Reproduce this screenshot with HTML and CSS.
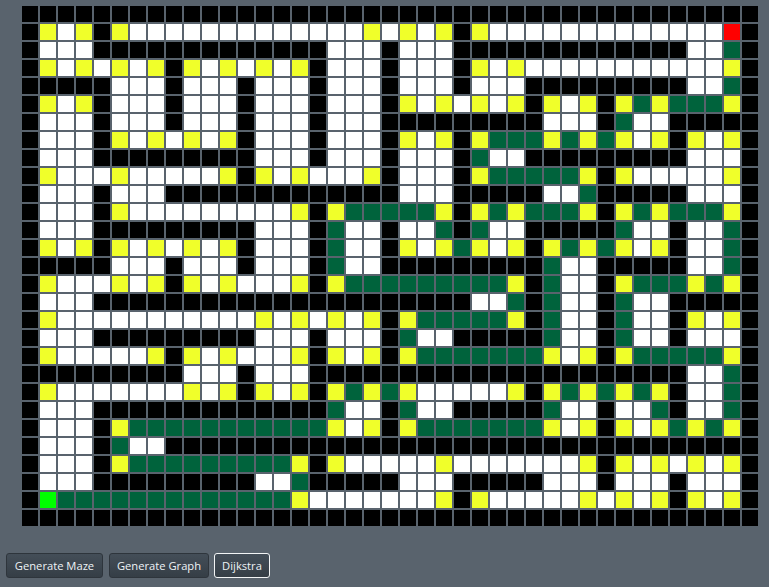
FILE: index.html
```html
<!DOCTYPE html>
<html lang="en">
<head>
  <meta charset="UTF-8">
  <title>Maze</title>
  <link rel="stylesheet" href="styles.css">
</head>
<body>

  <div id="maze" class="maze"></div>

  <div class="toolbar">
    <button type="button" class="btn-maze">Generate Maze</button>
    <button type="button" class="btn-graph">Generate Graph</button>
    <button type="button" class="btn-run">Dijkstra</button>
  </div>

  <script src="maze.js"></script>
</body>
</html>
```
FILE: styles.css
```css
body {
  margin: 0;
  padding: 6px 0 0 6px;
  height: 587px;
  box-sizing: border-box;
  overflow: hidden;
  background: #59636d;
  font-family: "Open Sans", "Noto Sans", sans-serif;
}
.maze {
  display: grid;
  grid-template-columns: repeat(41, 16px);
  grid-auto-rows: 16px;
  gap: 2px;
  margin-left: 16px;
}
.wall { background: #000; }
.open { background: #fff; }
.node { background: #f0ff2a; }
.path { background: #00633c; }
.start { background: #00ff00; }
.end { background: #ff0000; }
.toolbar {
  display: flex;
  gap: 6px;
  margin-top: 27px;
}
button {
  height: 25px;
  padding: 0;
  background: linear-gradient(#444e58, #353e46);
  color: #eef3f6;
  border: 1px solid #2e353c;
  border-radius: 3px;
  font-family: inherit;
  font-size: 11.2px;
}
.btn-maze { width: 97px; }
.btn-graph { width: 100px; }
.btn-run {
  width: 56px;
  margin-left: -1px;
  border-color: #f2f4f5;
}
```
FILE: maze.js
```js
// # wall, . open, y node, g path, S start, E end
// spaces only split the rows into three blocks to keep them readable
const rows = [
  "############## ############## #############",
  "#y.y#y........ .....y.y.y#y.. ...........E#",
  "#...########## ###...#...#### #########..g#",
  "#y.y.y.y#y.y.y .y#...#...#y.y ...........y#",
  "#####...#...#. ..#...#...#... #########..g#",
  "#y.y#...#...#. ..#...#y.y.y.y #y.y#ygygggy#",
  "#...#...#...#. ..#...######## #...#g..#####",
  "#...#y.y.y.y#. ..#...#y.y#ygg gygygy.y#y.y#",
  "#...#########. ..#...#...#g.. #########...#",
  "#y...y.....y#y .y...y#...#ygg gggy#y.....y#",
  "#...#...###### #######...#### #..g#####...#",
  "#...#y........ .y#ygggggy#ygy gggy#ygygggy#",
  "#...#########. ..#g..#..g#g.. #####g..#..g#",
  "#y.y#y.y.y.y#. ..#g..#y.ygy.y #ygygy.y#..g#",
  "#####...#...#. ..#g..######## #g..#####..g#",
  "#y...y.y#y.y.. .y#ygggggggggy #g..#ygggygy#",
  "#...########## ###########..g #g..#g..#####",
  "#y...........y .y.y.y#ygggggy #g..#g..#y.y#",
  "#...#########. ..#...#g..#### #g..#g..#...#",
  "#y.....y#y.y.. .y#y.y#ygggggg gy.y#ygggggy#",
  "#########...#. ..############ #########..g#",
  "#y.......y.y#y .y#ygygy.....y #ygygygy#..g#",
  "#...########## ###g..#g..#### #g..#..g#..g#",
  "#...#ygggggggg gggy.y#ygggggg gy.y#y.ygygy#",
  "#...#g..###### ############## #############",
  "#...#ygggggggg gy#y.....y.... ...y#y.y.y.y#",
  "#...#########. .g#####...#### #...#...#...#",
  "#Sgggggggggggg gy.......y#y.. ...y.y.y#y.y#",
  "############## ############## #############"
];

const classes = { "#": "wall", ".": "open", y: "node", g: "path", S: "start", E: "end" };
const maze = document.getElementById("maze");

rows.forEach(row => {
  row.replace(/ /g, "").split("").forEach(ch => {
    const cell = document.createElement("div");
    cell.className = classes[ch];
    maze.appendChild(cell);
  });
});
```
